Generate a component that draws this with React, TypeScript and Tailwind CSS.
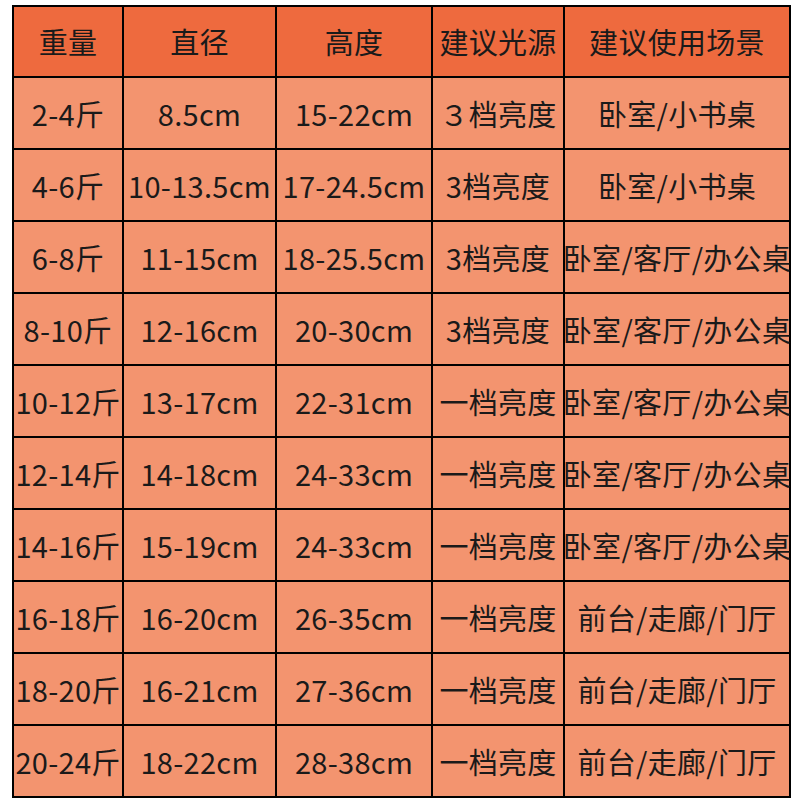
const headers = ['重量', '直径', '高度', '建议光源', '建议使用场景'];

const rows: string[][] = [
  ['2-4斤', '8.5cm', '15-22cm', '３档亮度', '卧室/小书桌'],
  ['4-6斤', '10-13.5cm', '17-24.5cm', '3档亮度', '卧室/小书桌'],
  ['6-8斤', '11-15cm', '18-25.5cm', '3档亮度', '卧室/客厅/办公桌'],
  ['8-10斤', '12-16cm', '20-30cm', '3档亮度', '卧室/客厅/办公桌'],
  ['10-12斤', '13-17cm', '22-31cm', '一档亮度', '卧室/客厅/办公桌'],
  ['12-14斤', '14-18cm', '24-33cm', '一档亮度', '卧室/客厅/办公桌'],
  ['14-16斤', '15-19cm', '24-33cm', '一档亮度', '卧室/客厅/办公桌'],
  ['16-18斤', '16-20cm', '26-35cm', '一档亮度', '前台/走廊/门厅'],
  ['18-20斤', '16-21cm', '27-36cm', '一档亮度', '前台/走廊/门厅'],
  ['20-24斤', '18-22cm', '28-38cm', '一档亮度', '前台/走廊/门厅'],
];

export default function App() {
  return (
    <div
      className="w-[800px] h-[800px] bg-white pt-[5px] pl-[12px]"
      style={{ fontFamily: '"Noto Sans CJK SC", "Noto Sans", sans-serif' }}
    >
      <div className="inline-grid grid-cols-[108px_151px_154px_130px_224px] grid-rows-[69px] auto-rows-[70px] gap-[2px] bg-black p-[2px] text-[29px] text-[#1a1a1a] leading-none tracking-[0.3px]">
        {headers.map((h) => (
          <div key={h} className="bg-[#ee6a3e] flex items-center justify-center whitespace-nowrap">
            {h}
          </div>
        ))}
        {rows.map((r, i) =>
          r.map((c, j) => (
            <div
              key={`${i}-${j}`}
              className="bg-[#f3946f] flex items-center justify-center whitespace-nowrap"
            >
              {c}
            </div>
          ))
        )}
      </div>
    </div>
  );
}
